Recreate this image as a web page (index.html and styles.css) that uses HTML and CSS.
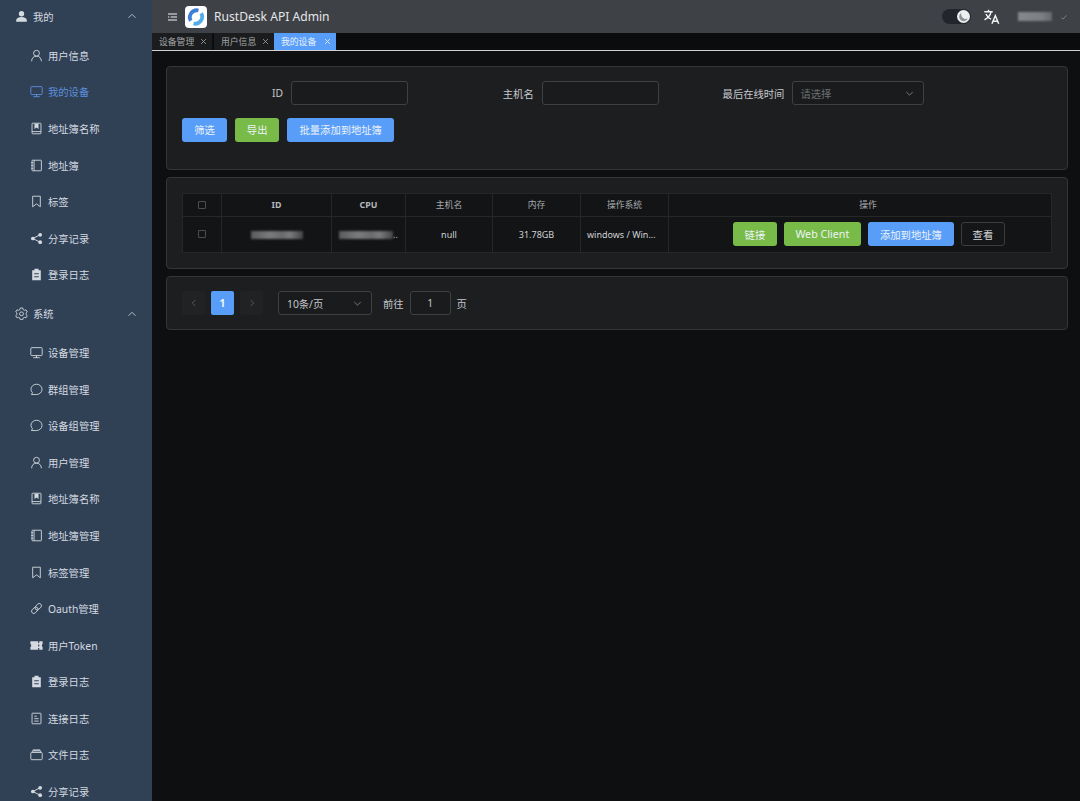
FILE: index.html
```html
<!DOCTYPE html>
<html lang="zh-CN">
<head>
<meta charset="utf-8">
<title>RustDesk API Admin</title>
<link rel="stylesheet" href="styles.css">
</head>
<body>
<svg class="defs" width="0" height="0">
  <symbol id="i-person-fill" viewBox="0 0 16 16"><circle cx="8" cy="4.600" r="3.300" fill="currentColor"/><path d="M1.500 14.500v-1.800c0-2.400 2.600-4 6.500-4s6.500 1.600 6.500 4v1.800z" fill="currentColor"/></symbol>
  <symbol id="i-user" viewBox="0 0 16 16"><g fill="none" stroke="currentColor" stroke-width="1.100"><circle cx="8" cy="5.200" r="3.600"/><path d="M2 14.600c0-3.400 2.600-5.800 6-5.800s6 2.400 6 5.800" stroke-linecap="round"/></g></symbol>
  <symbol id="i-monitor" viewBox="0 0 16 16"><g fill="none" stroke="currentColor" stroke-width="1.100"><rect x="1" y="2" width="14" height="9.800" rx="1.200"/><path d="M8 11.800v2.400M4.500 14.400h7" stroke-linecap="round"/></g></symbol>
  <symbol id="i-notebook" viewBox="0 0 16 16"><g fill="none" stroke="currentColor" stroke-width="1.100"><rect x="2.500" y="1.500" width="11" height="13" rx=".8"/><path d="M2.500 11.800h11"/></g><path d="M5.500 2h5v6.500l-2.500-1.600-2.500 1.600z" fill="currentColor"/></symbol>
  <symbol id="i-book" viewBox="0 0 16 16"><g fill="none" stroke="currentColor" stroke-width="1.100"><rect x="2.500" y="1.500" width="11.500" height="13" rx=".6"/><path d="M5 1.500v13M1.500 4.500h2.400M1.500 8h2.400M1.500 11.500h2.400"/></g></symbol>
  <symbol id="i-tag" viewBox="0 0 16 16"><path d="M3.300 1.500h9.400v13l-4.700-3.600-4.700 3.600z" fill="none" stroke="currentColor" stroke-width="1.100" stroke-linejoin="round"/></symbol>
  <symbol id="i-share" viewBox="0 0 16 16"><g fill="currentColor"><circle cx="12.500" cy="3.400" r="2.300"/><circle cx="12.500" cy="12.600" r="2.300"/><circle cx="3.500" cy="8" r="2.300"/></g><path d="M12.500 3.400L3.500 8l9 4.600" fill="none" stroke="currentColor" stroke-width="1.200"/></symbol>
  <symbol id="i-clip" viewBox="0 0 16 16"><path fill-rule="evenodd" d="M5.500 1h5v1.800h2.800V15H2.700V2.800h2.800zM5.200 6.500v1.300h5.600V6.500zM5.200 10v1.300h5.600V10z" fill="currentColor"/></symbol>
  <symbol id="i-gear" viewBox="0 0 16 16"><g fill="none" stroke="currentColor" stroke-width="1.100" stroke-linejoin="round"><path d="M6.500 1.200h3l.5 2 1.600.9 2-.6 1.500 2.600-1.500 1.400v1.800l1.500 1.400-1.500 2.600-2-.6-1.600.9-.5 2h-3l-.5-2-1.600-.9-2 .6L.9 10.700l1.500-1.400V7.500L.9 6.100l1.500-2.600 2 .6L6 3.200z"/><circle cx="8" cy="8.400" r="2.400"/></g></symbol>
  <symbol id="i-chat" viewBox="0 0 16 16"><path d="M8 1.500c3.800 0 6.800 2.800 6.800 6.300S11.800 14.200 8 14.200H1.800l1.200-2.300C1.900 10.700 1.200 9.300 1.200 7.800 1.200 4.300 4.200 1.500 8 1.500z" fill="none" stroke="currentColor" stroke-width="1.100" stroke-linejoin="round"/></symbol>
  <symbol id="i-link" viewBox="0 0 16 16"><g fill="none" stroke="currentColor" stroke-width="1.100" transform="rotate(-45 8 8)"><rect x=".5" y="5.300" width="9" height="5.400" rx="2.700"/><rect x="6.500" y="5.300" width="9" height="5.400" rx="2.700"/></g></symbol>
  <symbol id="i-ticket" viewBox="0 0 16 16"><path fill-rule="evenodd" d="M.5 2.800h9.500v2.200h1.400V2.800h4.100v3.400c-1.200.4-1.200 3.200 0 3.600v3.400h-4.100V11H10v2.200H.5V9.800c1.400-.4 1.400-3.200 0-3.600zM10 6.900v2.200h1.400V6.900z" fill="currentColor"/></symbol>
  <symbol id="i-doc" viewBox="0 0 16 16"><g fill="none" stroke="currentColor" stroke-width="1.100"><rect x="2.500" y="1.500" width="11" height="13" rx=".6"/><path d="M5.300 5.200h3M5.300 8.200h5.400M5.300 11.200h5.400"/></g></symbol>
  <symbol id="i-box" viewBox="0 0 16 16"><g fill="none" stroke="currentColor" stroke-width="1.100"><rect x="1" y="5.500" width="14" height="8.900" rx="1"/><path d="M2.800 5.500V3.600h10.400v1.900"/></g><rect x="3.500" y="1.800" width="9" height="1.500" fill="currentColor"/></symbol>
  <symbol id="i-up" viewBox="0 0 12 12"><path d="M2.500 7.800L6 4.300l3.500 3.500" fill="none" stroke="currentColor" stroke-width="1"/></symbol>
  <symbol id="i-down" viewBox="0 0 12 12"><path d="M2.500 4.300L6 7.800l3.500-3.500" fill="none" stroke="currentColor" stroke-width="1"/></symbol>
  <symbol id="i-left" viewBox="0 0 12 12"><path d="M7.500 2.500L4 6l3.500 3.500" fill="none" stroke="currentColor" stroke-width="1"/></symbol>
  <symbol id="i-right" viewBox="0 0 12 12"><path d="M4.500 2.500L8 6l-3.500 3.500" fill="none" stroke="currentColor" stroke-width="1"/></symbol>
  <symbol id="i-close" viewBox="0 0 8 8"><path d="M1.200 1.200l5.600 5.600M6.800 1.200L1.200 6.800" fill="none" stroke="currentColor" stroke-width=".9"/></symbol>
</svg>

<div class="app">
  <aside class="sidebar">
    <nav class="menu">
      <div class="group group-first"><svg class="ic"><use href="#i-person-fill"/></svg><span class="group-name">我的</span><svg class="chev"><use href="#i-up"/></svg></div>
      <a class="item"><svg class="ic"><use href="#i-user"/></svg>用户信息</a>
      <a class="item active"><svg class="ic"><use href="#i-monitor"/></svg>我的设备</a>
      <a class="item"><svg class="ic"><use href="#i-notebook"/></svg>地址簿名称</a>
      <a class="item"><svg class="ic"><use href="#i-book"/></svg>地址簿</a>
      <a class="item"><svg class="ic"><use href="#i-tag"/></svg>标签</a>
      <a class="item"><svg class="ic"><use href="#i-share"/></svg>分享记录</a>
      <a class="item"><svg class="ic"><use href="#i-clip"/></svg>登录日志</a>
      <div class="group"><svg class="ic"><use href="#i-gear"/></svg><span class="group-name">系统</span><svg class="chev"><use href="#i-up"/></svg></div>
      <a class="item"><svg class="ic"><use href="#i-monitor"/></svg>设备管理</a>
      <a class="item"><svg class="ic"><use href="#i-chat"/></svg>群组管理</a>
      <a class="item"><svg class="ic"><use href="#i-chat"/></svg>设备组管理</a>
      <a class="item"><svg class="ic"><use href="#i-user"/></svg>用户管理</a>
      <a class="item"><svg class="ic"><use href="#i-notebook"/></svg>地址簿名称</a>
      <a class="item"><svg class="ic"><use href="#i-book"/></svg>地址簿管理</a>
      <a class="item"><svg class="ic"><use href="#i-tag"/></svg>标签管理</a>
      <a class="item"><svg class="ic"><use href="#i-link"/></svg>Oauth管理</a>
      <a class="item"><svg class="ic"><use href="#i-ticket"/></svg>用户Token</a>
      <a class="item"><svg class="ic"><use href="#i-clip"/></svg>登录日志</a>
      <a class="item"><svg class="ic"><use href="#i-doc"/></svg>连接日志</a>
      <a class="item"><svg class="ic"><use href="#i-box"/></svg>文件日志</a>
      <a class="item"><svg class="ic"><use href="#i-share"/></svg>分享记录</a>
    </nav>
  </aside>

  <div class="main">
    <header class="topbar">
      <svg class="burger" viewBox="0 0 10 8"><path d="M0 .7h10M3 4h7M0 7.300h10M0 4h1.500" stroke="currentColor" stroke-width="1.300" fill="none"/></svg>
      <span class="logo">
        <svg viewBox="0 0 22 22"><g fill="none" stroke-width="3.800"><path d="M5.800 14.800A7 7 0 0 1 13.500 4.500" stroke="#3f7fd6"/><path d="M16.200 7.200A7 7 0 0 1 8.500 17.500" stroke="#52ade8"/></g></svg>
      </span>
      <span class="brand">RustDesk API Admin</span>
      <span class="spacer"></span>
      <span class="switch"><span class="knob"><svg viewBox="0 0 12 12"><path d="M4 2.500a4.200 4.200 0 1 0 6 5.400 4.500 4.500 0 0 1-6-5.400z" fill="#8e9094"/></svg></span></span>
      <svg class="lang" viewBox="0 0 20 20"><g fill="none" stroke="currentColor" stroke-width="1.700"><path d="M1.500 4.500h10M6.500 2v2.500M9.500 4.500C8.500 9 5.500 12 1.800 13.800M3.500 7c1.200 3 3.500 5 6 6"/><path d="M10.500 18.500L14.500 9l4 9.500M12 15.500h5"/></g></svg>
      <span class="username"></span>
      <svg class="user-caret" viewBox="0 0 12 12"><path d="M3 7l2 1.500L9 4" fill="none" stroke="currentColor" stroke-width="1"/></svg>
    </header>

    <div class="tabs">
      <span class="tab">设备管理<svg class="x"><use href="#i-close"/></svg></span>
      <span class="tab">用户信息<svg class="x"><use href="#i-close"/></svg></span>
      <span class="tab tab-on">我的设备<svg class="x"><use href="#i-close"/></svg></span>
    </div>

    <main class="content">
      <section class="card card-filter">
        <div class="form-row">
          <label class="field"><span class="field-label">ID</span><span class="input field-input"></span></label>
          <label class="field"><span class="field-label">主机名</span><span class="input field-input"></span></label>
          <label class="field"><span class="field-label">最后在线时间</span><span class="input field-select"><span class="placeholder">请选择</span><svg class="sel-chev"><use href="#i-down"/></svg></span></label>
        </div>
        <div class="btn-row">
          <button class="btn blue">筛选</button>
          <button class="btn green">导出</button>
          <button class="btn blue">批量添加到地址簿</button>
        </div>
      </section>

      <section class="card card-table">
        <table class="table">
          <colgroup><col class="c-check"><col class="c-id"><col class="c-cpu"><col class="c-host"><col class="c-mem"><col class="c-os"><col></colgroup>
          <thead>
            <tr><th><span class="check"></span></th><th class="strong">ID</th><th class="strong">CPU</th><th>主机名</th><th>内存</th><th>操作系统</th><th class="th-op">操作</th></tr>
          </thead>
          <tbody>
            <tr>
              <td><span class="check"></span></td>
              <td><span class="redact r-id"></span></td>
              <td class="cpu"><span class="redact r-cpu"></span><span class="dots">..</span></td>
              <td>null</td>
              <td>31.78GB</td>
              <td class="td-os">windows / Win...</td>
              <td>
                <div class="actions">
                  <button class="btn green">链接</button>
                  <button class="btn green web">Web Client</button>
                  <button class="btn blue">添加到地址簿</button>
                  <button class="btn ghost">查看</button>
                </div>
              </td>
            </tr>
          </tbody>
        </table>
      </section>

      <section class="card card-pager">
        <span class="pg pg-nav"><svg class="pg-ic"><use href="#i-left"/></svg></span>
        <span class="pg pg-on">1</span>
        <span class="pg pg-nav"><svg class="pg-ic"><use href="#i-right"/></svg></span>
        <span class="input pg-size">10条/页<svg class="sel-chev"><use href="#i-down"/></svg></span>
        <span class="pg-text goto">前往</span>
        <span class="input pg-input">1</span>
        <span class="pg-text">页</span>
      </section>
    </main>
  </div>
</div>
</body>
</html>
```

FILE: styles.css
```css
* { box-sizing: border-box; }
html, body { margin: 0; height: 100%; }
body {
  background: #0e0f10;
  color: #cfd3dc;
  font-family: "Noto Sans", "Noto Sans CJK SC", sans-serif;
  font-size: 10.3px;
  overflow: hidden;
}
.defs { position: absolute; }
.app { display: flex; height: 801px; overflow: hidden; }

/* sidebar */
.sidebar { width: 152px; flex: none; background: #304156; overflow: hidden; color: #d5dae0; }
.menu { margin-top: -3px; }
.group { height: 41px; display: flex; align-items: center; padding-left: 15px; padding-right: 14px; }
.group-first { height: 40px; padding-bottom: 2px; }
.group .ic { margin-right: 5px; }
.group-name { flex: 1; }
.ic { width: 13px; height: 13px; flex: none; }
.chev { width: 12px; height: 12px; color: #b5bcc6; }
.item { height: 36.6px; display: flex; align-items: center; padding-left: 30px; gap: 5px; }
.item.active { color: #5d8fdc; }

/* top bar */
.main { flex: 1; min-width: 0; display: flex; flex-direction: column; }
.topbar { height: 33px; flex: none; display: flex; align-items: center; background: #3e4146; padding-left: 16px; color: #f2f3f5; }
.burger { width: 9px; height: 8px; }
.logo { width: 22px; height: 22px; margin-left: 8px; background: #fff; border-radius: 4px; display: block; }
.logo svg { display: block; width: 22px; height: 22px; }
.brand { margin-left: 7px; font-size: 12.1px; color: #e4e6e8; }
.spacer { flex: 1; }
.switch { width: 29px; height: 15px; border-radius: 8px; background: #22262c; position: relative; }
.knob { position: absolute; right: 1px; top: 1px; width: 13px; height: 13px; border-radius: 50%; background: #eeeff1; display: block; }
.knob svg { display: block; width: 13px; height: 13px; }
.lang { width: 17px; height: 17px; margin-left: 12px; }
.username { width: 34px; height: 9px; margin-left: 18px; background: linear-gradient(90deg, #85888c, #7c7f83 70%, #65686c); filter: blur(1.2px); }
.user-caret { width: 10px; height: 10px; margin-left: 7px; margin-right: 11px; color: #8a8d91; }

/* tabs */
.tabs { height: 18px; flex: none; display: flex; background: #0b0c0d; border-bottom: 1px solid #cfd1d3; }
.tab { height: 17px; width: 60px; display: flex; align-items: center; padding: 0 5.5px 0 7px; background: #1b1c1d; color: #a3a6aa; font-size: 8.8px; margin-right: 2px; }
.tab + .tab { margin-right: 0; }
.tab.tab-on { background: #589ef8; color: #e9f1fc; width: 62px; }
.x { width: 7px; height: 7px; margin-left: auto; flex: none; color: #a3a6aa; }
.tab-on .x { color: #e9f1fc; }

/* cards */
.content { padding: 15px 12px 0 14px; }
.card { background: #1d1e1f; border: 1px solid #353637; border-radius: 4px; margin-bottom: 7px; }
.card-filter { height: 104px; padding: 14px 15px 0; }
.form-row { display: flex; gap: 24.7px; }
.field { display: flex; align-items: center; gap: 8px; }
.field-label { width: 101px; text-align: right; color: #c6c9cf; }
.input { display: flex; align-items: center; border: 1px solid #3f4042; border-radius: 3px; background: #1a1b1c; }
.field-input { width: 117px; height: 24px; }
.field-select { width: 132px; height: 24px; padding: 0 8px 0 7px; color: #6d7074; }
.placeholder { flex: 1; }
.sel-chev { width: 11px; height: 11px; color: #7d8084; flex: none; }

.btn-row { display: flex; gap: 8.3px; margin-top: 13px; }
.btn { height: 23.5px; border: 0; border-radius: 3px; padding: 0 11.6px; font: inherit; color: #eef3f8; white-space: nowrap; }
.blue { background: #589ef8; padding: 0 12.2px; }
.green { background: #78bb48; }
.ghost { background: #151617; border: 1px solid #3c3d3f; color: #d6d8dc; padding: 0 10.6px; }

/* table */
.card-table { height: 92px; padding: 15px 15px 0; }
.table { width: 870px; border-collapse: collapse; table-layout: fixed; background: #131415; }
.c-check { width: 39px; }
.c-id { width: 110px; }
.c-cpu { width: 74px; }
.c-host { width: 87px; }
.c-mem { width: 88px; }
.c-os { width: 88px; }
.table th, .table td { border: 1px solid #262728; padding: 0; text-align: center; font-weight: 400; font-size: 9px; color: #c0c3c9; }
.table th { height: 22.5px; font-size: 8.8px; color: #a6a9ae; }
.table th.strong { font-weight: 700; color: #b4b7bc; }
.table th.th-op { padding-left: 16px; }
.table td { height: 36px; color: #cfd2d7; }
.table td.td-os { text-align: left; padding-left: 6px; }
.check { display: block; width: 8.5px; height: 8.5px; margin: 0 auto; border: 1px solid #4c4d4f; border-radius: 1px; }
.redact { display: inline-block; height: 8px; vertical-align: middle; background: linear-gradient(90deg, #5a5b5c, #7a7b7c 35%, #6a6b6c 60%, #7a7b7c 75%, #444546); filter: blur(.9px); }
.r-id { width: 52px; }
.r-cpu { width: 54px; }
.dots { color: #b9bcc1; }
.actions { display: flex; gap: 7px; padding-left: 64px; }
.actions .btn { font-size: 10.3px; }
.actions .web { font-size: 10.7px; }

/* pager */
.card-pager { height: 54px; display: flex; align-items: center; padding-left: 15px; }
.pg { width: 23px; height: 24px; display: flex; align-items: center; justify-content: center; border-radius: 2px; margin-right: 6px; }
.pg-nav { background: #212223; color: #5e6063; }
.pg-ic { width: 10px; height: 10px; }
.pg-on { background: #589ef8; color: #f0f5fb; font-weight: 700; }
.pg-size { width: 94px; height: 24px; margin-left: 9px; padding: 0 8px; justify-content: space-between; color: #c3c6cb; }
.pg-text { color: #c3c6cb; }
.goto { margin-left: 11px; }
.pg-input { width: 41px; height: 24px; margin: 0 6px; justify-content: center; color: #c3c6cb; }
```
